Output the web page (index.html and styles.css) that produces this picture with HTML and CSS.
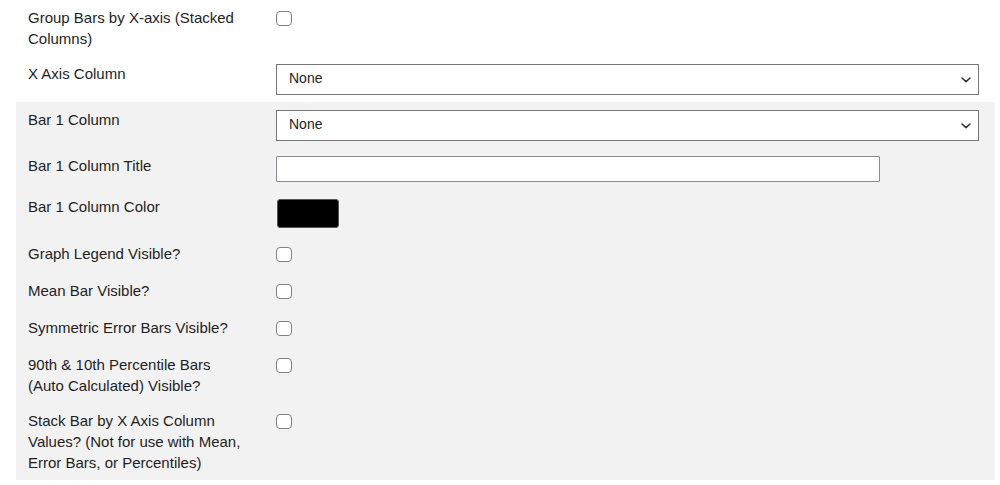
FILE: index.html
```html
<!DOCTYPE html>
<html lang="en">
<head>
<meta charset="utf-8">
<title>Bar Graph Settings</title>
<link rel="stylesheet" href="styles.css">
</head>
<body>
<div class="form">
  <div class="section">
    <div class="row">
      <label class="label">Group Bars by X-axis (Stacked Columns)</label>
      <div class="control"><input type="checkbox" class="check"></div>
    </div>
    <div class="row">
      <label class="label">X Axis Column</label>
      <div class="control">
        <div class="select-wrap">
          <select class="select"><option>None</option></select>
          <svg class="chevron" width="10" height="6" viewBox="0 0 10 6"><path d="M1 1 L5 4.6 L9 1" fill="none" stroke="#333" stroke-width="1.6" stroke-linecap="round" stroke-linejoin="round"/></svg>
        </div>
      </div>
    </div>
  </div>
  <div class="section gray">
    <div class="row">
      <label class="label">Bar 1 Column</label>
      <div class="control">
        <div class="select-wrap">
          <select class="select"><option>None</option></select>
          <svg class="chevron" width="10" height="6" viewBox="0 0 10 6"><path d="M1 1 L5 4.6 L9 1" fill="none" stroke="#333" stroke-width="1.6" stroke-linecap="round" stroke-linejoin="round"/></svg>
        </div>
      </div>
    </div>
    <div class="row">
      <label class="label">Bar 1 Column Title</label>
      <div class="control"><input type="text" class="text"></div>
    </div>
    <div class="row">
      <label class="label">Bar 1 Column Color</label>
      <div class="control"><div class="swatch"></div></div>
    </div>
    <div class="row">
      <label class="label">Graph Legend Visible?</label>
      <div class="control"><input type="checkbox" class="check"></div>
    </div>
    <div class="row">
      <label class="label">Mean Bar Visible?</label>
      <div class="control"><input type="checkbox" class="check"></div>
    </div>
    <div class="row">
      <label class="label">Symmetric Error Bars Visible?</label>
      <div class="control"><input type="checkbox" class="check"></div>
    </div>
    <div class="row">
      <label class="label">90th &amp; 10th Percentile Bars (Auto Calculated) Visible?</label>
      <div class="control"><input type="checkbox" class="check"></div>
    </div>
    <div class="row last">
      <label class="label">Stack Bar by X Axis Column Values? (Not for use with Mean, Error Bars, or Percentiles)</label>
      <div class="control"><input type="checkbox" class="check"></div>
    </div>
  </div>
</div>
</body>
</html>
```
FILE: styles.css
```css
html, body {
  margin: 0;
  padding: 0;
  background: #ffffff;
}
body {
  font-family: "Liberation Sans", Arial, Helvetica, sans-serif;
  font-size: 15px;
  color: #1e1e1e;
}
.form {
  margin-left: 16px;
  width: 979px;
}
.section.gray {
  background: #f2f2f2;
}
.row {
  display: flex;
  align-items: flex-start;
  padding: 7px 16px 7px 12px;
}
.row.last {
  padding-bottom: 7px;
}
.label {
  flex: 0 0 248px;
  box-sizing: border-box;
  padding-right: 32px;
  line-height: 21px;
}
.control {
  flex: 1 1 auto;
  display: flex;
}
.select-wrap {
  position: relative;
  flex: 1 1 auto;
  margin-top: 1px;
}
.select {
  appearance: none;
  -webkit-appearance: none;
  display: block;
  width: 100%;
  height: 31px;
  box-sizing: border-box;
  border: 1px solid #767676;
  border-radius: 0;
  background: #ffffff;
  padding: 0 12px 3px 12px;
  font-family: inherit;
  font-size: 14px;
  color: #222222;
  margin: 0;
}
.chevron {
  position: absolute;
  right: 8px;
  top: 13px;
  pointer-events: none;
}
.text {
  display: block;
  width: 604px;
  height: 26px;
  box-sizing: border-box;
  border: 1px solid #8a8a96;
  border-radius: 1px;
  background: #ffffff;
  margin: 1px 0 0 0;
  padding: 0 6px;
  font-family: inherit;
  font-size: 14px;
}
.swatch {
  width: 62px;
  height: 29px;
  box-sizing: border-box;
  margin: 3px 0 1px 1px;
  background: #000000;
  border: 1px solid #555555;
  border-radius: 3px;
}
.check {
  appearance: none;
  -webkit-appearance: none;
  display: block;
  width: 16px;
  height: 15px;
  box-sizing: border-box;
  margin: 4px 0 4px 0;
  border: 1px solid #808080;
  border-radius: 4px;
  background: #ffffff;
}
```
